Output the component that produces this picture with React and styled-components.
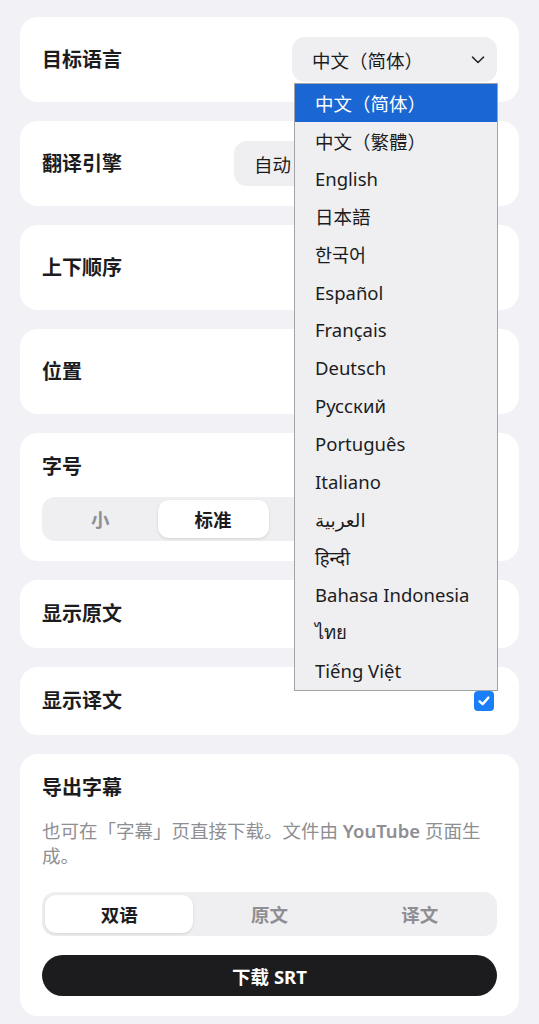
import React, { useState } from "react";
import styled, { createGlobalStyle } from "styled-components";

const GlobalStyle = createGlobalStyle`
  * { box-sizing: border-box; }
  body {
    margin: 0;
    background: #f2f2f6;
    font-family: "Noto Sans", "Noto Sans CJK SC", "DejaVu Sans", sans-serif;
    color: #1c1c1e;
  }
`;

const languages = [
  "中文（简体）",
  "中文（繁體）",
  "English",
  "日本語",
  "한국어",
  "Español",
  "Français",
  "Deutsch",
  "Русский",
  "Português",
  "Italiano",
  "العربية",
  "हिन्दी",
  "Bahasa Indonesia",
  "ไทย",
  "Tiếng Việt",
];

function ChevronIcon() {
  return (
    <svg width="14" height="8" viewBox="0 0 14 8" fill="none">
      <polyline
        points="1.5,1.2 7,6.5 12.5,1.2"
        stroke="#2b2b2e"
        strokeWidth="1.6"
        strokeLinecap="round"
        strokeLinejoin="round"
      />
    </svg>
  );
}

function CheckIcon() {
  return (
    <svg width="14" height="14" viewBox="0 0 14 14" fill="none">
      <polyline
        points="2.6,7.4 5.6,10.2 11.4,3.6"
        stroke="#fff"
        strokeWidth="2.4"
        strokeLinecap="round"
        strokeLinejoin="round"
      />
    </svg>
  );
}

function Segmented({ options, active, onPick }) {
  return (
    <Track>
      {options.map((o, i) => (
        <Segment key={o} $active={i === active} onClick={() => onPick(i)}>
          {o}
        </Segment>
      ))}
    </Track>
  );
}

export default function App() {
  const [fontSize, setFontSize] = useState(1);
  const [exportMode, setExportMode] = useState(0);
  const [target] = useState(0);

  return (
    <>
      <GlobalStyle />
      <Page>
        <Card>
          <Row>
            <Title>目标语言</Title>
            <SelectWrap>
              <SelectBox $width={205}>
                <span>{languages[target]}</span>
                <ChevronIcon />
              </SelectBox>
              <Listbox>
                {languages.map((l, i) => (
                  <Option key={l} $selected={i === target}>
                    {l}
                  </Option>
                ))}
              </Listbox>
            </SelectWrap>
          </Row>
        </Card>

        <Card>
          <Row>
            <Title>翻译引擎</Title>
            <SelectBox $width={263}>
              <span>自动</span>
              <ChevronIcon />
            </SelectBox>
          </Row>
        </Card>

        <Card>
          <Row>
            <Title>上下顺序</Title>
            <SelectBox $width={190}>
              <span>原文在上</span>
              <ChevronIcon />
            </SelectBox>
          </Row>
        </Card>

        <Card>
          <Row>
            <Title>位置</Title>
            <SelectBox $width={190}>
              <span>底部</span>
              <ChevronIcon />
            </SelectBox>
          </Row>
        </Card>

        <Card>
          <Title>字号</Title>
          <Spacer $h={16} />
          <Segmented
            options={["小", "标准", "大", "特大"]}
            active={fontSize}
            onPick={setFontSize}
          />
        </Card>

        <Card>
          <Row>
            <Title>显示原文</Title>
            <Checkbox>
              <CheckIcon />
            </Checkbox>
          </Row>
        </Card>

        <Card>
          <Row>
            <Title>显示译文</Title>
            <Checkbox>
              <CheckIcon />
            </Checkbox>
          </Row>
        </Card>

        <Card>
          <Title>导出字幕</Title>
          <Hint>
            也可在「字幕」页直接下载。文件由 <Brand>YouTube</Brand> 页面生成。
          </Hint>
          <Segmented
            options={["双语", "原文", "译文"]}
            active={exportMode}
            onPick={setExportMode}
          />
          <Spacer $h={19} />
          <DownloadButton>下载 SRT</DownloadButton>
        </Card>
      </Page>
    </>
  );
}

const Page = styled.div`
  display: flex;
  flex-direction: column;
  gap: 19px;
  padding: 17px 20px 10px;
`;

const Card = styled.section`
  background: #ffffff;
  border-radius: 18px;
  padding: 20px 22px;
`;

const Row = styled.div`
  display: flex;
  align-items: center;
  justify-content: space-between;
  min-height: 28px;
`;

const Title = styled.div`
  font-size: 20px;
  line-height: 28px;
  font-weight: 700;
  color: #1c1c1e;
`;

const Spacer = styled.div`
  height: ${(p) => p.$h}px;
`;

const SelectWrap = styled.div`
  position: relative;
`;

const SelectBox = styled.div`
  width: ${(p) => p.$width}px;
  height: 45px;
  border-radius: 13px;
  background: #efeff2;
  display: flex;
  align-items: center;
  justify-content: space-between;
  padding: 0 12px 0 20px;
  font-size: 18.5px;
  color: #1c1c1e;
`;

const Listbox = styled.div`
  position: absolute;
  top: calc(100% + 1px);
  left: 2px;
  width: 204px;
  z-index: 20;
  background: #efeff1;
  border: 1px solid #a4a4a8;
`;

const Option = styled.div`
  height: 37.85px;
  display: flex;
  align-items: center;
  padding: 0 20px;
  font-size: 18.5px;
  white-space: nowrap;
  color: ${(p) => (p.$selected ? "#ffffff" : "#1c1c1e")};
  background: ${(p) => (p.$selected ? "#1a66d2" : "transparent")};
`;

const Track = styled.div`
  display: grid;
  grid-auto-flow: column;
  grid-auto-columns: 1fr;
  gap: 2px;
  padding: 3px;
  height: 44px;
  border-radius: 13px;
  background: #efeff2;
`;

const Segment = styled.button`
  border: none;
  border-radius: 11px;
  font-family: inherit;
  font-size: 18.5px;
  font-weight: 700;
  cursor: pointer;
  background: ${(p) => (p.$active ? "#ffffff" : "transparent")};
  color: ${(p) => (p.$active ? "#1c1c1e" : "#8e8e93")};
  box-shadow: ${(p) => (p.$active ? "0 1px 3px rgba(0,0,0,0.12)" : "none")};
`;

const Checkbox = styled.span`
  width: 20px;
  height: 20px;
  margin-right: 3px;
  border-radius: 4px;
  background: #1a7ff6;
  display: inline-flex;
  align-items: center;
  justify-content: center;
`;

const Hint = styled.p`
  margin: 16px 0 24px;
  font-size: 18.5px;
  line-height: 25px;
  color: #8e8e93;
`;

const Brand = styled.span`
  font-weight: 600;
`;

const DownloadButton = styled.button`
  width: 100%;
  height: 41px;
  border: none;
  border-radius: 999px;
  background: #1c1c1e;
  color: #ffffff;
  font-family: inherit;
  font-size: 18.5px;
  font-weight: 700;
  cursor: pointer;
`;
